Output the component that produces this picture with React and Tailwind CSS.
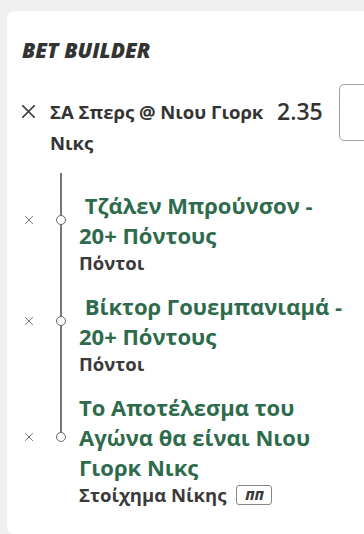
const font = { fontFamily: '"Open Sans", "Noto Sans", sans-serif' }

const legs = [
  { title: "\u00a0Τζάλεν Μπρούνσον - 20+ Πόντους", sub: "Πόντοι" },
  { title: "\u00a0Βίκτορ Γουεμπανιαμά - 20+ Πόντους", sub: "Πόντοι" },
  { title: "Το Αποτέλεσμα του Αγώνα θα είναι Νιου Γιορκ Νικς", sub: "Στοίχημα Νίκης", badge: true },
]

const Cross = ({ size, stroke }) => (
  <svg width={size} height={size} viewBox="0 0 10 10" fill="none">
    <path d="M0.5 0.5 L9.5 9.5 M9.5 0.5 L0.5 9.5" stroke="currentColor" strokeWidth={stroke} strokeLinecap="round" />
  </svg>
)

export default function App() {
  return (
    <div className="min-h-screen bg-[#efefef] pt-[11px] pl-[7px] overflow-hidden" style={font}>
      <div className="w-[400px] min-h-[523px] bg-white rounded-l-[7px] pl-[15px] pt-[25px]">
        <h2 className="text-[21px] leading-[28px] font-extrabold italic text-[#333]">BET BUILDER</h2>

        <div className="flex items-start mt-[32px]">
          <div className="h-[31px] flex items-center text-[#444]">
            <Cross size={13} stroke={1.3} />
          </div>
          <div className="w-[224px] ml-[15px] text-[18.5px] leading-[31px] font-bold text-[#333]">
            ΣΑ Σπερς @ Νιου Γιορκ Νικς
          </div>
          <div className="ml-[3px] text-[23px] leading-[31px] font-semibold text-[#333]">2.35</div>
          <div className="ml-[16px] -mt-[12px] w-[60px] h-[57px] border border-[#a0a0a0] rounded-[5px] flex-none" />
        </div>

        <div className="relative mt-[15px] pt-[17px]">
          <div className="absolute left-[38px] top-0 w-[1.5px] h-[268px] bg-[#777]" />
          <div className="flex flex-col gap-[15px]">
            {legs.map((leg, i) => (
              <div key={i}>
                <div className="flex items-center">
                  <div className="w-[14px] flex justify-center text-[#555]">
                    <Cross size={8} stroke={1} />
                  </div>
                  <div className="w-[14px] ml-[18px] flex justify-center">
                    <div className="relative w-[10px] h-[10px] rounded-full border-[1.5px] border-[#666] bg-white" />
                  </div>
                  <div className="ml-[11px] w-[268px] text-[22px] leading-[30px] font-bold text-[#2e6b4c]">{leg.title}</div>
                </div>
                <div className="pl-[57px] flex items-center text-[18.5px] leading-[26px] font-bold text-[#3a3a3a]">
                  {leg.sub}
                  {leg.badge && (
                    <span className="ml-[10px] w-[36px] h-[20px] flex items-center justify-center border border-[#888] rounded-[3px] text-[13px] font-extrabold italic leading-none">
                      ΠΠ
                    </span>
                  )}
                </div>
              </div>
            ))}
          </div>
        </div>
      </div>
    </div>
  )
}
